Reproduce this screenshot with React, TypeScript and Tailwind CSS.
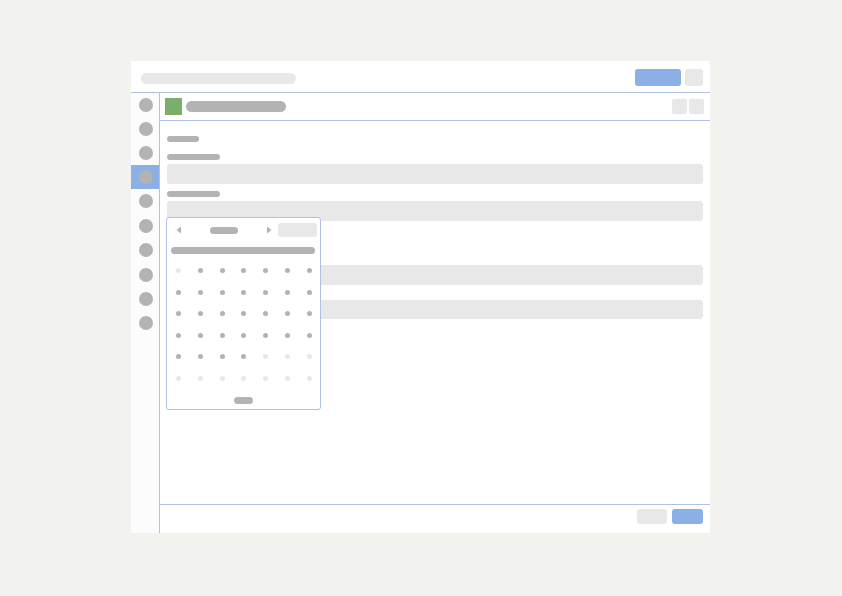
import React from "react";

const BLUE = "bg-[#8ab0e6]";

function Dot({ light }: { light: boolean }) {
  return (
    <div className="flex h-[21.5px] items-center justify-center">
      <div className={`h-[5px] w-[5px] rounded-full ${light ? "bg-[#e8e8e8]" : "bg-[#b3b3b3]"}`} />
    </div>
  );
}

export default function App() {
  const sidebar = [0, 1, 2, 3, 4, 5, 6, 7, 8, 9];
  const dots: boolean[] = [];
  for (let i = 0; i < 42; i++) {
    dots.push(i === 0 || i >= 32);
  }
  return (
    <div className="h-[596px] w-[842px] bg-[#f2f2ee] pl-[131px] pt-[61px]" style={{ fontFamily: "'Liberation Sans', sans-serif" }}>
      <div className="flex h-[472px] w-[579px] flex-col bg-white">
        {/* top bar */}
        <div className="flex h-[32px] shrink-0 items-start justify-between border-b border-[#aec3e3] pl-[10px] pr-[7px]">
          <div className="mt-[12px] h-[11px] w-[155px] rounded-full bg-[#e8e8e8]" />
          <div className="mt-[8px] flex gap-[4px]">
            <div className={`h-[17px] w-[46px] rounded-[3px] ${BLUE}`} />
            <div className="h-[17px] w-[18px] rounded-[3px] bg-[#e8e8e8]" />
          </div>
        </div>
        <div className="flex min-h-0 flex-1">
          {/* sidebar */}
          <div className="flex w-[29px] shrink-0 flex-col border-r border-[#aec3e3] bg-[#fcfcfc]">
            {sidebar.map((i) => (
              <React.Fragment key={i}>
                {(i === 5 || i === 7) && <div className="h-[1px]" />}
                <div className={`flex h-[24px] items-center pl-[8px] ${i === 3 ? BLUE : ""}`}>
                  <div className="h-[14px] w-[14px] rounded-full bg-[#b3b3b3]" />
                </div>
              </React.Fragment>
            ))}
          </div>
          {/* main */}
          <div className="flex min-w-0 flex-1 flex-col">
            <div className="flex h-[28px] shrink-0 items-center justify-between border-b border-[#aec3e3] pl-[5px] pr-[6px]">
              <div className="flex items-center gap-[4px]">
                <div className="h-[17px] w-[17px] bg-[#7cae6a]" />
                <div className="h-[11px] w-[100px] rounded-full bg-[#b3b3b3]" />
              </div>
              <div className="flex gap-[2px]">
                <div className="h-[15px] w-[15px] rounded-[2px] bg-[#e8e8e8]" />
                <div className="h-[15px] w-[15px] rounded-[2px] bg-[#e8e8e8]" />
              </div>
            </div>
            <div className="relative flex flex-1 flex-col px-[7px]">
              <div className="mt-[15px] h-[6px] w-[32px] rounded-full bg-[#b3b3b3]" />
              <div className="mt-[12px] h-[6px] w-[53px] rounded-full bg-[#b3b3b3]" />
              <div className="mt-[4px] h-[20px] rounded-[3px] bg-[#e8e8e8]" />
              <div className="mt-[7px] h-[6px] w-[53px] rounded-full bg-[#b3b3b3]" />
              <div className="mt-[4px] h-[20px] rounded-[3px] bg-[#e8e8e8]" />
              <div className="mt-[44px] h-[20px] rounded-[3px] bg-[#e8e8e8]" />
              <div className="mt-[15px] h-[19px] rounded-[3px] bg-[#e8e8e8]" />

              {/* date popover */}
              <div className="absolute left-[6px] top-[96px] flex h-[193px] w-[155px] flex-col rounded-[3px] border border-[#aec3e3] bg-white">
                <div className="relative h-[20px] shrink-0">
                  <svg className="absolute left-[9px] top-[8px]" width="6" height="8" viewBox="0 0 6 8">
                    <path d="M5 0.5 L0.5 4 L5 7.5 Z" fill="#b3b3b3" />
                  </svg>
                  <div className="absolute left-[43px] top-[9px] h-[7px] w-[28px] rounded-full bg-[#b3b3b3]" />
                  <svg className="absolute left-[99px] top-[8px]" width="6" height="8" viewBox="0 0 6 8">
                    <path d="M1 0.5 L5.5 4 L1 7.5 Z" fill="#b3b3b3" />
                  </svg>
                  <div className="absolute left-[111px] top-[5px] h-[14px] w-[39px] rounded-[3px] bg-[#e8e8e8]" />
                </div>
                <div className="ml-[4px] mt-[9px] h-[7px] w-[144px] rounded-full bg-[#b3b3b3]" />
                <div className="mt-[5.75px] grid grid-cols-7 pl-[1px]">
                  {dots.map((l, i) => (
                    <Dot key={i} light={l} />
                  ))}
                </div>
                <div className="mx-auto mt-[8px] h-[7px] w-[19px] rounded-full bg-[#b3b3b3]" />
              </div>
            </div>
            <div className="flex h-[29px] shrink-0 items-start justify-end gap-[5px] border-t border-[#aec3e3] pr-[7px] pt-[4px]">
              <div className="h-[15px] w-[30px] rounded-[3px] bg-[#e8e8e8]" />
              <div className={`h-[15px] w-[31px] rounded-[3px] ${BLUE}`} />
            </div>
          </div>
        </div>
      </div>
    </div>
  );
}
